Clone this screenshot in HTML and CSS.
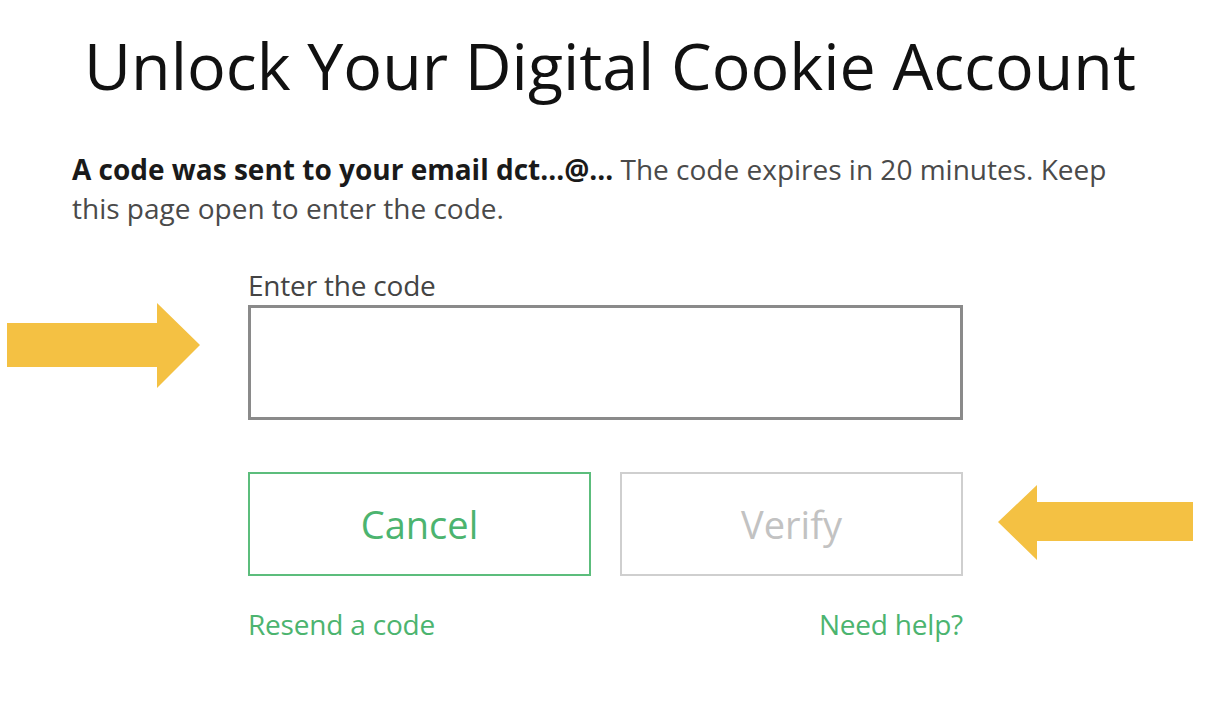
FILE: index.html
```html
<!DOCTYPE html>
<html lang="en">
<head>
<meta charset="utf-8">
<title>Unlock Your Digital Cookie Account</title>
<link rel="stylesheet" href="styles.css">
</head>
<body>
<main class="page">
  <h1 class="title">Unlock Your Digital Cookie Account</h1>
  <p class="intro"><strong>A code was sent to your email dct...@...</strong> The code expires in 20 minutes. Keep this page open to enter the code.</p>
  <form class="form">
    <label class="label" for="code">Enter the code</label>
    <input class="code-input" id="code" type="text">
    <div class="buttons">
      <button type="button" class="btn btn-cancel">Cancel</button>
      <button type="button" class="btn btn-verify" disabled>Verify</button>
    </div>
    <div class="links">
      <a class="link" href="#">Resend a code</a>
      <a class="link" href="#">Need help?</a>
    </div>
  </form>
  <svg class="arrow arrow-right" width="200" height="90" viewBox="0 0 200 90" aria-hidden="true">
    <polygon points="7,20 157,20 157,0 200,42 157,85 157,64 7,64" fill="#f4c143"/>
  </svg>
  <svg class="arrow arrow-left" width="200" height="100" viewBox="0 0 200 100" aria-hidden="true">
    <polygon points="0,37 39,0 39,17 195,17 195,56 39,56 39,75" fill="#f4c143"/>
  </svg>
</main>
</body>
</html>
```
FILE: styles.css
```css
* { box-sizing: border-box; }
html, body { margin: 0; padding: 0; background: #fff; }
body { font-family: "Open Sans", "Liberation Sans", sans-serif; color: #222; }
.page { position: relative; width: 1220px; height: 722px; padding-top: 22px; }
.title {
  margin: 0;
  text-align: center;
  font-weight: 400;
  font-size: 64.5px;
  line-height: 86px;
  color: #111;
}
.intro {
  margin: 42px 90px 0 72px;
  font-size: 28px;
  line-height: 39px;
  color: #4a4a4a;
}
.intro strong { color: #1a1a1a; font-weight: 700; }
.form {
  width: 715px;
  margin: 38px 0 0 248px;
  display: flex;
  flex-direction: column;
}
.label { font-size: 28px; line-height: 39px; color: #444; letter-spacing: -0.2px; }
.code-input {
  height: 115px;
  border: 3px solid #8a8a8a;
  background: #fff;
  outline: none;
}
.buttons {
  margin-top: 52px;
  display: flex;
  justify-content: space-between;
}
.btn {
  width: 343px;
  height: 104px;
  background: #fff;
  font-family: inherit;
  font-size: 38px;
  padding: 0;
}
.btn-cancel { border: 2px solid #5cbd7c; color: #4cb46f; }
.btn-verify { border: 2px solid #cfcfcf; color: #c2c2c2; }
.links {
  margin-top: 28px;
  display: flex;
  justify-content: space-between;
}
.link { font-size: 28px; line-height: 40px; color: #4cb46f; text-decoration: none; letter-spacing: -0.2px; }
.arrow { position: absolute; }
.arrow-right { left: 0; top: 303px; }
.arrow-left { left: 998px; top: 485px; }
```
